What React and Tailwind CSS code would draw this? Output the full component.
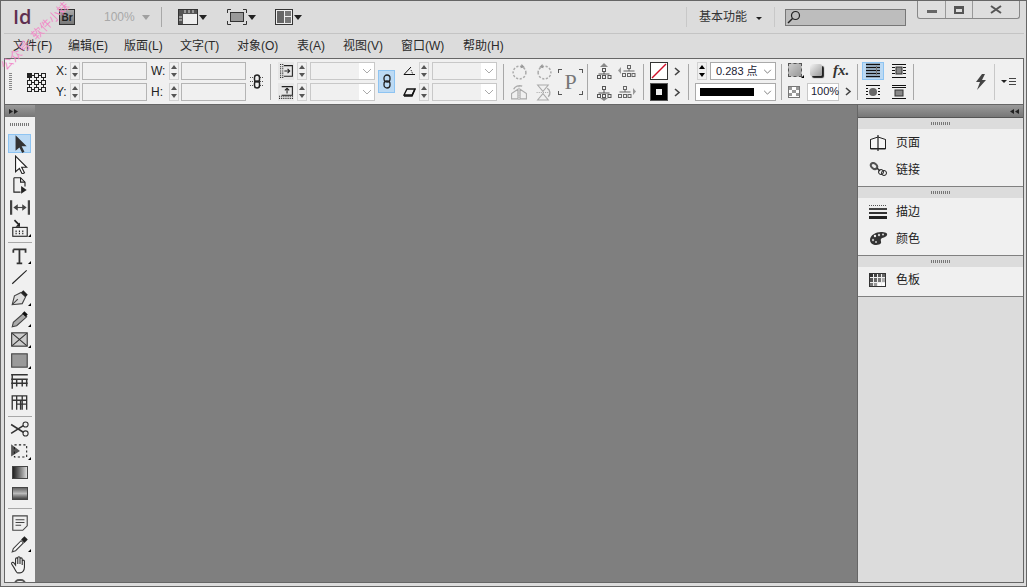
import React from "react";

const Tri = ({ className = "" }) => (
  <svg width="8" height="5" viewBox="0 0 8 5" className={className}>
    <path d="M0 0h8L4 5z" fill="currentColor" />
  </svg>
);

const Spin = ({ dark }) => (
  <div className={`flex h-[18px] w-[10px] flex-col items-center justify-around border border-[#d2d2d2] ${dark ? "text-black" : "text-[#555]"}`}>
    <svg width="6" height="4" viewBox="0 0 6 4"><path d="M0 4h6L3 0z" fill="currentColor" /></svg>
    <svg width="6" height="4" viewBox="0 0 6 4"><path d="M0 0h6L3 4z" fill="currentColor" /></svg>
  </div>
);

const Chev = () => (
  <svg width="10" height="6" viewBox="0 0 10 6" fill="none" stroke="#aaa" strokeWidth="1"><path d="M1 1l4 4 4-4" /></svg>
);

const Field = ({ w = "w-[65px]" }) => <div className={`h-[18px] ${w} border border-[#b4b4b4] bg-[#f0f0f0]`} />;

const Combo = () => (
  <div className="flex h-[18px] w-[65px] items-center justify-end border border-[#c8c8c8] bg-[#f0f0f0]">
    <div className="flex h-full w-[15px] items-center justify-center bg-white"><Chev /></div>
  </div>
);

const Div = ({ ml, className = "h-[36px]" }) => <div className={`w-px bg-[#a8a8a8] ${ml} ${className}`} />;

const Grip = () => (
  <svg width="20" height="3" viewBox="0 0 20 3">
    {[0, 2, 4, 6, 8, 10, 12, 14, 16, 18].map((x) => <rect key={x} x={x} width="1" height="3" fill="#777" />)}
  </svg>
);

// control panel glyphs
const RefPoint = () => (
  <svg width="20" height="20" viewBox="0 0 20 20" fill="none" stroke="#222">
    {[0, 7, 14].map((y) => [0, 7, 14].map((x) => (
      <rect key={`${x}${y}`} x={x + 1.5} y={y + 1.5} width="4" height="4" fill={x === 0 && y === 0 ? "#222" : "#f0f0f0"} />
    )))}
    <path d="M6 3.5h2M13 3.5h2M6 10.5h2M13 10.5h2M6 17.5h2M13 17.5h2M3.5 6v2M3.5 13v2M10.5 6v2M10.5 13v2M17.5 6v2M17.5 13v2" />
  </svg>
);

const LinkIcon = ({ w = 14, h = 15 }) => (
  <svg width={w} height={h} viewBox="0 0 14 15" fill="none">
    <path d="M0 3.5h4M10 3.5h4M0 7.500h14M0 11.500h4M10 11.500h4" stroke="#555" strokeDasharray="1 1" />
    <rect x="4.500" y="1" width="5" height="7" rx="2.500" stroke="#222" strokeWidth="1.500" />
    <rect x="4.500" y="7" width="5" height="7" rx="2.500" stroke="#222" strokeWidth="1.500" />
  </svg>
);

const ScaleIcon = ({ up }) => (
  <div className="flex h-[18px] w-[16px] items-center justify-center bg-[#e6e6e6]">
    <svg width="15" height="15" viewBox="0 0 14 14" fill="none" stroke="#222">
      {up ? (
        <>
          <path d="M2.500 1.500h10v8h-10" />
          <path d="M0 12.500h14M0 10.500h14" strokeDasharray="1 1" />
          <path d="M7.500 8V3M5.500 5l2-2 2 2" />
        </>
      ) : (
        <>
          <path d="M4.500 1.500h8v10h-8" />
          <path d="M1.500 0v14M3.500 0v14" strokeDasharray="1 1" />
          <path d="M5 6.500h5M8 4.500l2 2-2 2" />
        </>
      )}
    </svg>
  </div>
);

const Shear = () => (
  <svg width="13" height="10" viewBox="0 0 13 10"><path d="M4 2h8L9 8H1z" fill="#f0f0f0" stroke="#111" strokeWidth="1.300" /><path d="M1 9h8l3-7" fill="none" stroke="#111" strokeWidth="1.500" /></svg>
);
const Angle = () => (
  <svg width="13" height="10" viewBox="0 0 13 10" fill="none" stroke="#111"><path d="M1 8.500L8 1M1 8.500h11" /><path d="M8 4l2 4.500" strokeDasharray="1 1" /></svg>
);

const Rot = ({ flip }) => (
  <svg width="17" height="17" viewBox="0 0 16 16" fill="none" stroke="#aaa" style={flip ? { transform: "scaleX(-1)" } : undefined}>
    <circle cx="8" cy="9" r="6" strokeDasharray="2 1.500" strokeWidth="1.400" />
    <path d="M10 1l3 3-4 1z" fill="#999" stroke="none" />
  </svg>
);

const FlipH = () => (
  <svg width="18" height="17" viewBox="0 0 16 16" fill="none" stroke="#aaa">
    <path d="M7 5L1 9v5h6zM9 5l6 4v5H9z" />
    <path d="M3 5a6 5 0 0 1 8-3" strokeWidth="1.300" />
    <path d="M8 2v13" strokeDasharray="1 1" />
  </svg>
);
const FlipV = () => (
  <svg width="18" height="17" viewBox="0 0 16 16" fill="none" stroke="#aaa">
    <path d="M2 1h10L7 7zM2 15h10L7 9z" />
    <path d="M1 8h12" strokeDasharray="1 1" />
    <path d="M11 4a5 5 0 0 1 1 8" strokeWidth="1.300" />
  </svg>
);

const Org = ({ arrow }) => (
  <svg width="17" height="17" viewBox="0 0 17 17" fill="none" stroke="#555">
    <rect x="6.500" y={arrow === "up" ? 5.500 : 2.500} width="3" height="3" />
    <path d={arrow === "up" ? "M8 9v2M2.500 11h11" : "M8 6v3M2.500 9h11"} />
    <rect x="1.500" y={arrow === "up" ? 12.500 : 10.500} width="3" height="3" />
    <rect x="6.500" y={arrow === "up" ? 12.500 : 10.500} width="3" height="3" />
    <rect x="12" y={arrow === "up" ? 12.500 : 10.500} width="3" height="3" />
    {arrow === "up" && <path d="M4 4h8L8 0z" fill="#888" stroke="none" />}
    {arrow === "down" && <path d="M4 14h8l-4 3z" fill="#888" stroke="none" />}
  </svg>
);

const OrgSide = ({ left }) => (
  <svg width="18" height="14" viewBox="0 0 18 14" fill="none" stroke="#666">
    <g transform={left ? "translate(4 0)" : "translate(0 0)"}>
      <rect x="5.500" y="1.500" width="3" height="3" />
      <path d="M7 5v2M1.500 7h11" />
      <rect x="0.500" y="9.500" width="3" height="3" />
      <rect x="5.500" y="9.500" width="3" height="3" />
      <rect x="10" y="9.500" width="3" height="3" />
    </g>
    {left ? <path d="M3 3v7L0 6.500z" fill="#999" stroke="none" /> : <path d="M15 3v7l3-3.500z" fill="#999" stroke="none" />}
  </svg>
);

const Next = () => (
  <svg width="7" height="9" viewBox="0 0 7 9" fill="none" stroke="#444" strokeWidth="1.600"><path d="M1 1l4 3.500L1 8" /></svg>
);

const TextWrap = ({ kind }) => (
  <svg width="16" height="16" viewBox="0 0 16 16" fill="none" stroke="#111">
    {kind === 0 && <><path d="M1 1.500h14M1 4.500h14M1 7.500h14M1 10.500h14M1 13.500h14" strokeWidth="1.400" /><path d="M11.500 3v9" stroke="#777" /></>}
    {kind === 1 && <><path d="M1 1.500h14M1 14.500h14M1 4.500h3M1 7.500h3M1 10.500h3M12 4.500h3M12 7.500h3M12 10.500h3" /><rect x="5" y="4" width="6" height="7" fill="#888" stroke="#333" /></>}
    {kind === 2 && <><path d="M1 1.500h14M1 14.500h14M1 4.500h2M1 7.500h2M1 10.500h2M13 4.500h2M13 7.500h2M13 10.500h2" /><circle cx="8" cy="8" r="4" fill="#666" stroke="none" /></>}
    {kind === 3 && <><path d="M1 1.500h14M1 14.500h14M1 3.500h14" /><rect x="4" y="6" width="8" height="6" fill="#888" stroke="#333" /></>}
  </svg>
);

// title bar glyphs
const FrameIcon = () => (
  <svg width="20" height="16" viewBox="0 0 20 16">
    <rect x="0.500" y="0.500" width="19" height="15" fill="#eee" stroke="#333" />
    <rect x="1" y="1" width="18" height="4" fill="#555" />
    <rect x="1" y="1" width="4" height="14" fill="#555" />
    <path d="M7 1v3M11 1v3M15 1v3M1 8h3M1 11h3" stroke="#ddd" />
    <rect x="5" y="5" width="14" height="10" fill="#eee" />
  </svg>
);
const ScreenIcon = () => (
  <svg width="20" height="16" viewBox="0 0 20 16" fill="none">
    <rect x="3.500" y="3.500" width="13" height="9" fill="#999" stroke="#333" />
    <path d="M0.500 4V0.500H4M16 0.500h3.500V4M0.500 12v3.500H4M16 15.500h3.500V12" stroke="#333" />
  </svg>
);
const LayoutIcon = () => (
  <svg width="18" height="16" viewBox="0 0 18 16">
    <rect x="0.500" y="0.500" width="17" height="15" fill="#eee" stroke="#333" />
    <rect x="2" y="2" width="7" height="12" fill="#666" />
    <rect x="10" y="2" width="6" height="5" fill="#777" />
    <rect x="10" y="8" width="6" height="6" fill="#777" />
  </svg>
);

// toolbox glyphs
const tools = {
  select: <path d="M5 1v14l3.500-3 2.500 5 2-1-2.500-5H15z" fill="#333" />,
  direct: <path d="M5 1v14l3.500-3 2.500 5 2-1-2.500-5H15z" fill="#fff" stroke="#222" />,
  page: <><path d="M3.500 1.500h6l4 4v4M3.500 1.500v13h6" fill="none" stroke="#222" /><path d="M9.500 1.500v4h4" fill="none" stroke="#222" /><path d="M10 9v7l5-3.500z" fill="#222" /></>,
  gap: <><path d="M1 2v13M17 2v13" stroke="#444" strokeWidth="2" /><path d="M4 8.500h10" stroke="#444" /><path d="M3 8.500l4-3v6zM15 8.500l-4-3v6z" fill="#444" /></>,
  content: <><rect x="2.500" y="7.500" width="13" height="8" fill="#eee" stroke="#222" /><path d="M5 11h1M8 11h1M11 11h1M5 13h1M8 13h1M11 13h1" stroke="#222" strokeWidth="1.500" /><path d="M4 1l4 4" stroke="#222" strokeWidth="1.500" /><path d="M9 7V3L5 7z" fill="#222" /></>,
  type: <><path d="M3 3h11v3M3 3v3M8.500 3v12M6 15.500h5" fill="none" stroke="#333" strokeWidth="1.600" /></>,
  line: <path d="M2 15L15 3" stroke="#222" />,
  pen: <><path d="M2 15l2-8 6-3 4 4-3 6z" fill="#ddd" stroke="#444" /><path d="M10 4l2-2 4 4-2 2z" fill="#222" /><path d="M2 15l5-5" stroke="#444" /></>,
  pencil: <><path d="M2 16l1-4 9-8 3 3-9 8z" fill="#aaa" stroke="#444" /><path d="M11 4l2-2 3 3-2 2z" fill="#111" /></>,
  frame: <><rect x="1.500" y="2.500" width="14" height="12" fill="#ccc" stroke="#333" /><path d="M2 3l13 11M15 3L2 14" stroke="#333" /></>,
  rect: <rect x="1.500" y="2.500" width="14" height="12" fill="#9a9a9a" stroke="#444" />,
  table: <><path d="M1 2.500h15M1 6.500h15M1 10h15M2 2v13M6 6v7M11 6v7M15 6v7" fill="none" stroke="#333" strokeWidth="1.300" /></>,
  table2: <><path d="M2 2.500h13M2 6.500h13M2 2v13M6 2v13M9.500 6v9M11 2v13M15 2v13M6 10h9" fill="none" stroke="#333" strokeWidth="1.200" /></>,
  scissors: <><path d="M1 4l11 7M1 12l11-7" stroke="#333" strokeWidth="1.400" /><circle cx="14" cy="4" r="2.300" fill="none" stroke="#333" /><circle cx="14" cy="12" r="2.300" fill="none" stroke="#333" /></>,
  free: <><path d="M1 2v11l8-5z" fill="#555" /><rect x="4" y="2.500" width="11" height="11" fill="none" stroke="#222" strokeDasharray="2 2" /></>,
  note: <><path d="M2.500 2.500h13v9l-4 4h-9z" fill="#eee" stroke="#444" /><path d="M5 6h8M5 8.500h8M5 11h5" stroke="#444" /></>,
  drop: <><path d="M2 16l1-3 7-7 2 2-7 7z" fill="#fff" stroke="#444" /><path d="M10 5l3-3 3 3-3 3z" fill="#222" /></>,
  hand: <path d="M4 12L1.500 8c-.5-1 1-2 2-1L5 9V3.500c0-1.300 2-1.300 2 0V8 2.500c0-1.300 2-1.300 2 0V8 3.500c0-1.300 2-1.300 2 0V9 5.500c0-1.300 2-1.300 2 0V11c0 3-2 5-4 5H7c-1 0-2-2-3-4z" fill="#f4f4f4" stroke="#333" />,
};

const Tool = ({ name, sel, corner, h = "h-[21px]" }) => (
  <div className={`relative flex ${h} w-full shrink-0 items-center justify-center`}>
    <div className={`relative flex h-[19px] w-[23px] items-center justify-center ${sel ? "border border-[#8ec4f2] bg-[#bcdaf4]" : ""}`}>
      <svg width="20" height="19" viewBox="0 0 18 17" className="shrink-0">{tools[name]}</svg>
      {corner && <span className="absolute bottom-[1px] right-0 h-0 w-0 border-b-[3px] border-l-[3px] border-b-black border-l-transparent" />}
    </div>
  </div>
);

const GradBox = ({ kind }) => (
  <div className="flex h-[21px] w-full shrink-0 items-center justify-center">
    <div className={`h-[13px] w-[16px] border border-[#444] ${kind === 0 ? "bg-gradient-to-r from-[#222] to-[#ddd]" : "bg-gradient-to-b from-[#666] via-[#bbb] to-[#444]"}`} />
  </div>
);

const Sep = ({ my = "my-[2.5px]" }) => <div className={`mx-auto h-px w-[24px] shrink-0 bg-[#a8a8a8] ${my}`} />;

const PanelRow = ({ icon, label, h = "h-[27px]" }) => (
  <div className={`flex ${h} items-center pl-[11px]`}>
    <div className="flex w-[27px] justify-start">{icon}</div>
    <span className="text-[12px] text-[#222]">{label}</span>
  </div>
);

const Dock = ({ children, pb = "pb-[3px]" }) => (
  <div className={`border-b border-[#808080] bg-[#f0f0f0] ${pb}`}>
    <div className="flex h-[11px] items-center justify-center bg-[#dcdcdc]"><Grip /></div>
    {children}
  </div>
);

const PagesIcon = () => (
  <svg width="18" height="16" viewBox="0 0 18 16" fill="none" stroke="#222">
    <path d="M1.500 4.500L9 2l7.500 2.500v9h-15z" fill="#f6f6f6" />
    <path d="M9 0v16" strokeWidth="1.200" />
    <path d="M1.500 4.500V14h15V4.500" />
  </svg>
);
const LinksIcon = () => (
  <svg width="19" height="15" viewBox="0 0 19 15" fill="none">
    <ellipse cx="5" cy="4" rx="3.500" ry="2.500" transform="rotate(40 5 4)" stroke="#555" strokeWidth="2" />
    <path d="M8 6l3 3" stroke="#333" strokeWidth="1.500" />
    <circle cx="12" cy="10" r="2.500" stroke="#222" />
    <circle cx="15" cy="11" r="2.500" stroke="#222" />
  </svg>
);
const StrokeIcon = () => (
  <svg width="18" height="14" viewBox="0 0 18 14">
    <path d="M0 .5h18" stroke="#555" strokeDasharray="1 1" />
    <rect y="3" width="18" height="2" fill="#444" />
    <rect y="7" width="18" height="2" fill="#333" />
    <rect y="11" width="18" height="3" fill="#222" />
  </svg>
);
const PaletteIcon = () => (
  <svg width="19" height="15" viewBox="0 0 19 15">
    <path d="M1 9c0-5 6-8 11-8 4 0 7 1 6 3-1 3-5 2-6 4s2 4-2 5.500C6 15 1 13 1 9z" fill="#333" />
    <circle cx="6" cy="5" r="1.200" fill="#eee" />
    <circle cx="10" cy="4" r="1.200" fill="#ccc" />
    <circle cx="14" cy="3.500" r="1" fill="#ddd" />
    <circle cx="4" cy="9" r="1.200" fill="#bbb" />
    <circle cx="7" cy="11" r="1" fill="#ccc" />
  </svg>
);
const SwatchIcon = () => (
  <div className="grid h-[14px] w-[17px] grid-cols-4 grid-rows-3 gap-px border border-[#333] bg-[#eee]">
    {["#333", "#444", "#555", "#666", "#555", "#666", "#777", "#aaa", "#777", "#999", "#fff", "#fff"].map((c, i) => (
      <div key={i} style={{ background: c }} />
    ))}
  </div>
);

const menus = [
  ["文件(F)", "w-[55px]"],
  ["编辑(E)", "w-[56px]"],
  ["版面(L)", "w-[56px]"],
  ["文字(T)", "w-[57px]"],
  ["对象(O)", "w-[60px]"],
  ["表(A)", "w-[46px]"],
  ["视图(V)", "w-[58px]"],
  ["窗口(W)", "w-[62px]"],
  ["帮助(H)", "w-[60px]"],
];

export default function App() {
  return (
    <div className="relative flex h-[587px] w-[1027px] flex-col overflow-hidden border border-[#666] bg-[#dcdcdc] pb-[3px] font-['Liberation_Sans','Noto_Sans_CJK_SC',sans-serif] text-[12px] text-[#333]">
      {/* title bar */}
      <div className="flex h-[32px] shrink-0 items-center whitespace-nowrap">
        <span className="ml-[12px] w-[20px] font-['Open_Sans',sans-serif] text-[20px] font-semibold leading-none text-[#5f2f50]">Id</span>
        <div className="ml-[26px] flex h-[16px] w-[16px] items-center justify-center border border-[#333] bg-gradient-to-b from-[#aaa] to-[#777] text-[10px] font-bold text-[#222]">Br</div>
        <span className="ml-[29px] text-[12px] text-[#a8a8a8]">100%</span>
        <Tri className="ml-[7px] text-[#a0a0a0]" />
        <div className="ml-[11px] h-[20px] w-px bg-[#a8a8a8]" />
        <div className="ml-[16px]"><FrameIcon /></div>
        <Tri className="ml-[1px] text-[#222]" />
        <div className="ml-[20px]"><ScreenIcon /></div>
        <Tri className="ml-[1px] text-[#222]" />
        <div className="ml-[19px]"><LayoutIcon /></div>
        <Tri className="ml-[1px] text-[#222]" />

        <div className="ml-auto h-[20px] w-px bg-[#c8c8c8]" />
        <span className="ml-[12px] text-[12px] text-[#333]">基本功能</span>
        <svg width="6" height="3" viewBox="0 0 6 3" className="ml-[9px] mt-[3px]"><path d="M0 0h6L3 3z" fill="#222" /></svg>
        <div className="ml-[12px] h-[20px] w-px bg-[#c8c8c8]" />
        <div className="ml-[10px] flex h-[17px] w-[121px] items-center border border-[#777] bg-[#bdbdbd] pl-[1px]">
          <svg width="14" height="14" viewBox="0 0 14 14" fill="none" stroke="#222" strokeWidth="1.200"><circle cx="8.500" cy="5.500" r="4" /><path d="M5.500 8.500L1 13" strokeWidth="1.500" /></svg>
        </div>
        <div className="mb-[14px] ml-[11px] mr-[6px] flex h-[18px] w-[103px] rounded-b-[3px] border border-t-0 border-[#888] bg-[#dedede] text-[#555]">
          <div className="flex w-[28px] items-center justify-center border-r border-[#999]"><div className="mt-[3px] h-[3px] w-[10px] bg-[#666]" /></div>
          <div className="flex w-[27px] items-center justify-center border-r border-[#999]"><div className="h-[8px] w-[10px] border-2 border-t-[3px] border-[#555]" /></div>
          <div className="flex flex-1 items-center justify-center">
            <svg width="12" height="9" viewBox="0 0 12 9" stroke="#555" strokeWidth="2"><path d="M1 1l10 7M11 1L1 8" /></svg>
          </div>
        </div>
      </div>
      <div className="ml-[3px] mr-[2px] h-px shrink-0 bg-[#c4c4c4]" />

      {/* menu */}
      <div className="flex h-[24px] shrink-0 items-center pl-[12px] text-[12px] text-[#2a2a2a]">
        {menus.map(([m, w]) => <span key={m} className={w}>{m}</span>)}
      </div>

      {/* control panel */}
      <div className="ml-[3px] mr-[2px] flex h-[47px] shrink-0 items-center border border-[#666] bg-[#f0f0f0] pl-[4px] text-[#222]">
        <div className="h-[18px]"><svg width="3" height="18" viewBox="0 0 3 18">{[0, 2, 4, 6, 8, 10, 12, 14, 16].map((y) => <rect key={y} y={y} width="3" height="1" fill="#888" />)}</svg></div>
        <div className="ml-[14px]"><RefPoint /></div>
        <div className="ml-[10px] grid grid-cols-[12px_10px_65px] items-center gap-x-[2px] gap-y-[3px]">
          <span className="text-[12px]">X:</span><Spin /><Field />
          <span className="text-[12px]">Y:</span><Spin /><Field />
        </div>
        <div className="ml-[4px] grid grid-cols-[16px_10px_65px] items-center gap-x-[2px] gap-y-[3px]">
          <span className="text-[12px]">W:</span><Spin /><Field />
          <span className="text-[12px]">H:</span><Spin /><Field />
        </div>
        <div className="ml-[4px]"><LinkIcon /></div>
        <Div ml="ml-[6px]" />
        <div className="ml-[7px] grid grid-cols-[16px_10px_65px] items-center gap-x-[3px] gap-y-[3px]">
          <ScaleIcon /><Spin /><Combo />
          <ScaleIcon up /><Spin /><Combo />
        </div>
        <div className="ml-[3px] flex h-[23px] w-[17px] items-center justify-center border border-[#8ec4f2] bg-[#bcdaf4]"><svg width="8" height="15" viewBox="0 0 8 15" fill="none" stroke="#222" strokeWidth="1.300"><rect x="1" y="1" width="6" height="7" rx="3" /><rect x="1" y="7" width="6" height="7" rx="3" /></svg></div>
        <div className="ml-[8px] grid grid-cols-[13px_10px_65px] items-center gap-x-[3px] gap-y-[3px]">
          <div className="flex justify-center"><Angle /></div><Spin /><Combo />
          <div className="flex justify-center"><Shear /></div><Spin /><Combo />
        </div>
        <Div ml="ml-[6px]" />
        <div className="ml-[6px] grid grid-cols-[18px_18px] justify-items-center gap-x-[7px] gap-y-[4px]">
          <Rot /><Rot flip /><FlipH /><FlipV />
        </div>
        <div className="relative ml-[5px] flex h-[26px] w-[25px] items-center justify-center font-['Liberation_Serif',serif] text-[22px] leading-none text-[#777]">
          P
          <span className="absolute left-0 top-0 h-[4px] w-[4px] border-l border-t border-[#555]" />
          <span className="absolute right-0 top-0 h-[4px] w-[4px] border-r border-t border-[#555]" />
          <span className="absolute bottom-0 left-0 h-[4px] w-[4px] border-b border-l border-[#555]" />
          <span className="absolute bottom-0 right-0 h-[4px] w-[4px] border-b border-r border-[#555]" />
        </div>
        <Div ml="ml-[4px]" />
        <div className="ml-[8px] grid grid-cols-[17px_18px] items-center gap-x-[5px] gap-y-[4px]">
          <Org arrow="up" /><OrgSide left /><Org arrow="down" /><OrgSide />
        </div>
        <Div ml="ml-[7px]" />
        <div className="ml-[6px] flex flex-col gap-[3px]">
          <svg width="18" height="18" viewBox="0 0 18 18"><rect x="0.500" y="0.500" width="17" height="17" fill="#fff" stroke="#333" /><path d="M2 16L16 2" stroke="#d0102a" strokeWidth="1.500" /></svg>
          <div className="flex h-[18px] w-[18px] items-center justify-center border border-[#555] bg-black"><div className="h-[6px] w-[6px] bg-[#eee]" /></div>
        </div>
        <div className="ml-[6px] flex flex-col gap-[12px]"><Next /><Next /></div>
        <Div ml="ml-[7px]" />
        <div className="ml-[6px] flex flex-col gap-[3px]">
          <div className="flex items-center gap-[3px]">
            <div className="ml-[2px]"><Spin dark /></div>
            <div className="flex h-[18px] w-[66px] items-center justify-between border border-[#aaa] bg-white pl-[5px] pr-[3px] text-[11px] text-[#223]">
              0.283 点<svg width="9" height="5" viewBox="0 0 10 6" fill="none" stroke="#666"><path d="M1 1l4 4 4-4" /></svg>
            </div>
          </div>
          <div className="flex h-[18px] w-[81px] items-center justify-between border border-[#aaa] bg-white pl-[4px] pr-[3px]">
            <div className="h-[8px] w-[54px] bg-black" /><svg width="9" height="5" viewBox="0 0 10 6" fill="none" stroke="#666"><path d="M1 1l4 4 4-4" /></svg>
          </div>
        </div>
        <Div ml="ml-[5px]" />
        <div className="ml-[6px] flex flex-col gap-[5px]">
          <div className="flex h-[15px] items-center gap-[8px]">
            <div className="relative h-[14px] w-[14px] border border-dashed border-[#555] bg-gradient-to-br from-[#ccc] to-[#999]">
              <span className="absolute -bottom-[2px] -right-[3px] h-0 w-0 border-b-[3px] border-l-[3px] border-b-black border-l-transparent" />
            </div>
            <div className="h-[12px] w-[12px] rounded-[2px] bg-gradient-to-br from-[#f4f4f4] to-[#999] shadow-[2px_2px_1px_#222]" />
            <span className="ml-[3px] font-['Liberation_Serif',serif] text-[15px] font-bold italic leading-none text-[#333]">fx.</span>
          </div>
          <div className="flex h-[18px] items-center">
            <div className="grid h-[12px] w-[12px] grid-cols-3 grid-rows-3 border border-[#777] bg-white">
              {[0, 1, 2, 3, 4, 5, 6, 7, 8].map((i) => <div key={i} className={i % 2 === 0 ? "bg-[#999]" : "bg-white"} />)}
            </div>
            <div className="ml-[7px] flex h-[18px] w-[32px] items-center border border-[#c8c8c8] bg-white pl-[3px] text-[11px] text-[#223]">100%</div>
            <div className="ml-[6px]"><Next /></div>
          </div>
        </div>
        <Div ml="ml-[5px]" />
        <div className="ml-[4px] grid grid-cols-[22px_18px] items-center justify-items-center gap-x-[6px] gap-y-[3px]">
          <div className="flex h-[18px] w-[22px] items-center justify-center border border-[#8ec4f2] bg-[#bcdaf4]"><TextWrap kind={0} /></div>
          <TextWrap kind={1} />
          <div className="flex h-[18px] w-[22px] items-center justify-center"><TextWrap kind={2} /></div>
          <TextWrap kind={3} />
        </div>
        <Div ml="ml-[5px]" />
        <svg width="12" height="16" viewBox="0 0 12 16" className="ml-[61px]"><path d="M7 0L1 8h4l-3 8 9-10H7l3-6z" fill="#444" /></svg>
        <div className="ml-[7px] h-[36px] w-px bg-[#c8c8c8]" />
        <div className="ml-[6px] flex items-center gap-[2px]">
          <svg width="6" height="3" viewBox="0 0 6 3"><path d="M0 0h6L3 3z" fill="#222" /></svg>
          <div className="flex flex-col gap-[2px]"><div className="h-px w-[7px] bg-[#444]" /><div className="h-px w-[7px] bg-[#444]" /><div className="h-px w-[7px] bg-[#444]" /></div>
        </div>
      </div>

      {/* work area */}
      <div className="ml-[3px] mr-[2px] flex min-h-0 flex-1 border-x border-b border-[#666] bg-[#7f7f7f]">
        {/* toolbox */}
        <div className="flex w-[30px] shrink-0 flex-col overflow-hidden">
          <div className="flex h-[12px] shrink-0 items-center bg-gradient-to-b from-[#9a9a9a] to-[#777] pl-[4px] text-[#222]">
            <svg width="9" height="5" viewBox="0 0 9 5"><path d="M0 0l4 2.500L0 5zM5 0l4 2.500L5 5z" fill="currentColor" /></svg>
          </div>
          <div className="flex min-h-0 flex-1 flex-col overflow-hidden bg-[#f0f0f0] pr-[1px]">
            <div className="flex h-[15px] shrink-0 items-center justify-center"><Grip /></div>
            <Tool name="select" sel h="h-[22px]" />
            <Tool name="direct" />
            <Tool name="page" />
            <Tool name="gap" h="h-[22px]" />
            <Tool name="content" corner />
            <Sep />
            <Tool name="type" corner />
            <Tool name="line" />
            <Tool name="pen" corner />
            <Tool name="pencil" corner />
            <Tool name="frame" corner />
            <Tool name="rect" corner />
            <Tool name="table" />
            <Tool name="table2" />
            <Sep />
            <Tool name="scissors" />
            <Tool name="free" corner h="h-[22px]" />
            <GradBox kind={0} />
            <GradBox kind={1} />
            <Sep my="my-[3.500px]" />
            <Tool name="note" />
            <Tool name="drop" corner />
            <Tool name="hand" />
            <div className="mx-auto mt-[4px] h-[10px] w-[12px] shrink-0 rounded-full border-2 border-[#555]" />
          </div>
        </div>

        {/* canvas */}
        <div className="min-w-0 flex-1" />

        {/* panel dock */}
        <div className="flex w-[166px] shrink-0 flex-col border-l border-[#666] bg-[#dcdcdc]">
          <div className="flex h-[13px] shrink-0 items-center justify-end border-b border-[#555] bg-gradient-to-b from-[#9a9a9a] to-[#777] pr-[4px] text-[#222]">
            <svg width="9" height="5" viewBox="0 0 9 5"><path d="M4 0L0 2.500 4 5zM9 0L5 2.500 9 5z" fill="currentColor" /></svg>
          </div>
          <Dock>
            <PanelRow icon={<PagesIcon />} label="页面" />
            <PanelRow icon={<LinksIcon />} label="链接" />
          </Dock>
          <Dock>
            <PanelRow icon={<StrokeIcon />} label="描边" />
            <PanelRow icon={<PaletteIcon />} label="颜色" />
          </Dock>
          <Dock>
            <PanelRow icon={<SwatchIcon />} label="色板" h="h-[26px]" />
          </Dock>
        </div>
      </div>

      {/* watermark */}
      <span className="absolute left-[-11px] top-[26px] -rotate-45 whitespace-nowrap text-[12px] text-[#f28ac8]">公众号: 软件小妹</span>
    </div>
  );
}
